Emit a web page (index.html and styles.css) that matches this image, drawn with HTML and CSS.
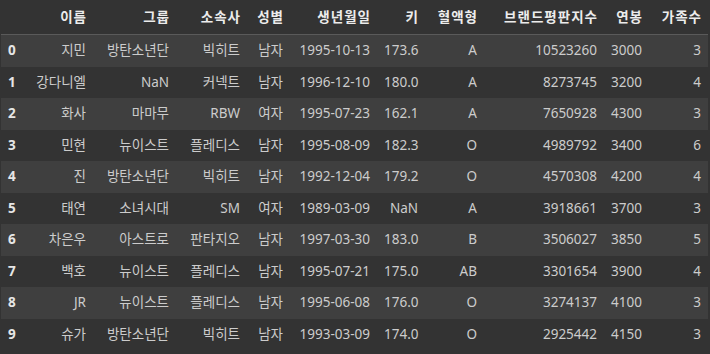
FILE: index.html
```html
<!DOCTYPE html>
<html lang="ko">
<head>
<meta charset="utf-8">
<link rel="stylesheet" href="styles.css">
</head>
<body>
<div class="frame">
<table class="df">
<colgroup>
<col class="c-idx"><col class="c-name"><col class="c-group"><col class="c-agency"><col class="c-sex"><col class="c-birth"><col class="c-height"><col class="c-blood"><col class="c-brand"><col class="c-pay"><col class="c-family">
</colgroup>
<thead>
<tr><th></th><th>이름</th><th>그룹</th><th>소속사</th><th>성별</th><th>생년월일</th><th>키</th><th>혈액형</th><th>브랜드평판지수</th><th>연봉</th><th>가족수</th></tr>
</thead>
<tbody>
<tr><th>0</th><td>지민</td><td>방탄소년단</td><td>빅히트</td><td>남자</td><td>1995-10-13</td><td>173.6</td><td>A</td><td>10523260</td><td>3000</td><td>3</td></tr>
<tr><th>1</th><td>강다니엘</td><td>NaN</td><td>커넥트</td><td>남자</td><td>1996-12-10</td><td>180.0</td><td>A</td><td>8273745</td><td>3200</td><td>4</td></tr>
<tr><th>2</th><td>화사</td><td>마마무</td><td>RBW</td><td>여자</td><td>1995-07-23</td><td>162.1</td><td>A</td><td>7650928</td><td>4300</td><td>3</td></tr>
<tr><th>3</th><td>민현</td><td>뉴이스트</td><td>플레디스</td><td>남자</td><td>1995-08-09</td><td>182.3</td><td>O</td><td>4989792</td><td>3400</td><td>6</td></tr>
<tr><th>4</th><td>진</td><td>방탄소년단</td><td>빅히트</td><td>남자</td><td>1992-12-04</td><td>179.2</td><td>O</td><td>4570308</td><td>4200</td><td>4</td></tr>
<tr><th>5</th><td>태연</td><td>소녀시대</td><td>SM</td><td>여자</td><td>1989-03-09</td><td>NaN</td><td>A</td><td>3918661</td><td>3700</td><td>3</td></tr>
<tr><th>6</th><td>차은우</td><td>아스트로</td><td>판타지오</td><td>남자</td><td>1997-03-30</td><td>183.0</td><td>B</td><td>3506027</td><td>3850</td><td>5</td></tr>
<tr><th>7</th><td>백호</td><td>뉴이스트</td><td>플레디스</td><td>남자</td><td>1995-07-21</td><td>175.0</td><td>AB</td><td>3301654</td><td>3900</td><td>4</td></tr>
<tr><th>8</th><td>JR</td><td>뉴이스트</td><td>플레디스</td><td>남자</td><td>1995-06-08</td><td>176.0</td><td>O</td><td>3274137</td><td>4100</td><td>3</td></tr>
<tr><th>9</th><td>슈가</td><td>방탄소년단</td><td>빅히트</td><td>남자</td><td>1993-03-09</td><td>174.0</td><td>O</td><td>2925442</td><td>4150</td><td>3</td></tr>
</tbody>
</table>
</div>
</body>
</html>
```
FILE: styles.css
```css
html, body {
  margin: 0;
  padding: 0;
  background: #333333;
}
.frame {
  padding-left: 1px;
}
.df {
  border-collapse: collapse;
  border-spacing: 0;
  table-layout: fixed;
  width: 707px;
  font-family: "Noto Sans", "Noto Sans CJK KR", sans-serif;
  font-size: 13.5px;
  color: #cccccc;
}
.c-idx { width: 23px; }
.c-name { width: 69px; }
.c-group { width: 83px; }
.c-agency { width: 71px; }
.c-sex { width: 43px; }
.c-birth { width: 87px; }
.c-height { width: 48px; }
.c-blood { width: 59px; }
.c-brand { width: 120px; }
.c-pay { width: 45px; }
.c-family { width: 59px; }

.df th, .df td {
  padding: 0 7px;
  text-align: right;
  white-space: nowrap;
  overflow: visible;
}
.df thead th {
  height: 34px;
  line-height: 34px;
  padding-right: 6px;
  letter-spacing: 1px;
  font-weight: bold;
  color: #ececec;
  border-bottom: 1px solid #5a5a5a;
}
.df tbody th, .df tbody td {
  height: 31.5px;
  line-height: 31.5px;
}
.df tbody th {
  text-align: left;
  font-weight: bold;
  color: #e6e6e6;
}
.df tbody tr:nth-child(odd) {
  background: #3f3f3f;
}
```
